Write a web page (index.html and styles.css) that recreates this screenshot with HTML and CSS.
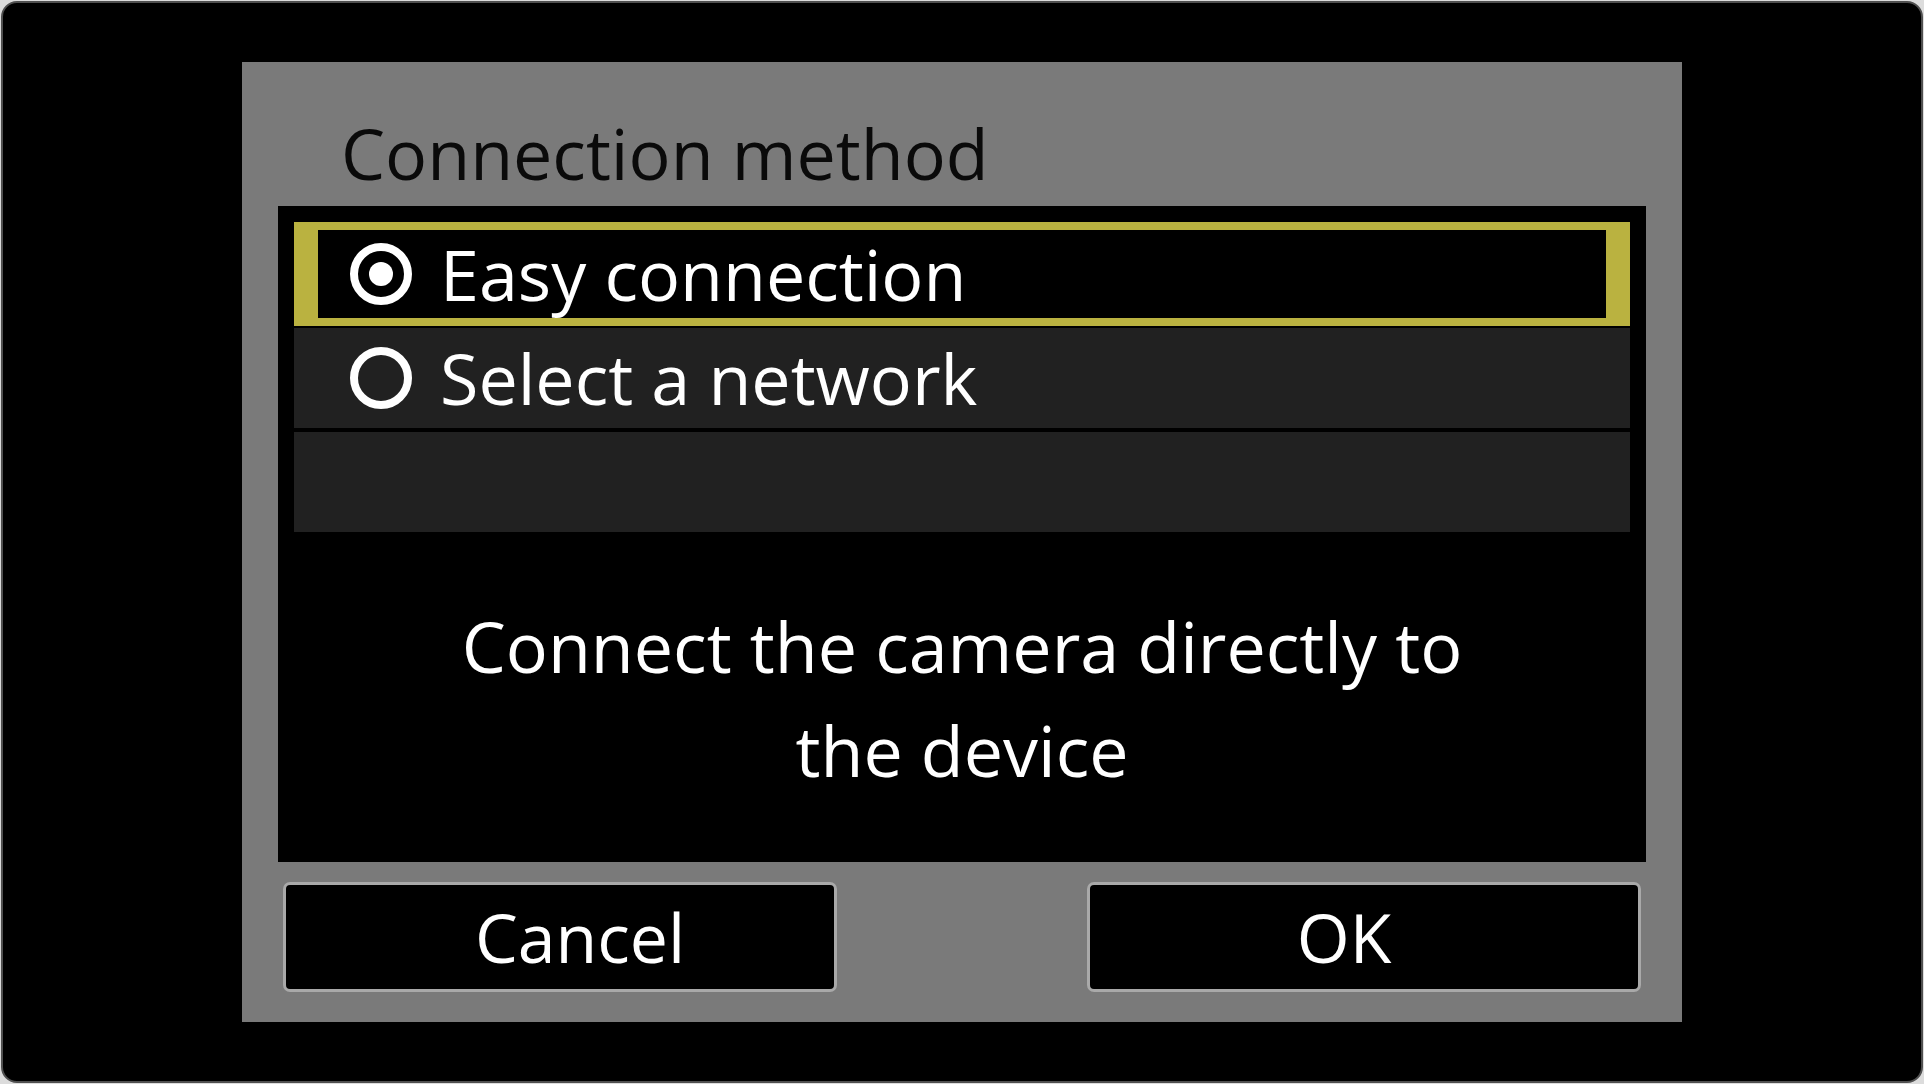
FILE: index.html
```html
<!DOCTYPE html>
<html lang="en">
<head>
<meta charset="utf-8">
<title>Connection method</title>
<link rel="stylesheet" href="styles.css">
</head>
<body>
<div class="screen">
  <div class="panel">
    <div class="title">Connection method</div>
    <div class="list">
      <div class="row selected">
        <span class="radio on"></span>
        <span class="label">Easy connection</span>
      </div>
      <div class="row second">
        <span class="radio"></span>
        <span class="label">Select a network</span>
      </div>
      <div class="row empty"></div>
      <p class="desc">Connect the camera directly to the device</p>
    </div>
    <div class="buttons">
      <div class="btn cancel">Cancel</div>
      <div class="btn ok">OK</div>
    </div>
  </div>
</div>
</body>
</html>
```
FILE: styles.css
```css
html, body {
  margin: 0;
  padding: 0;
}
body {
  width: 1924px;
  height: 1084px;
  background: #dcdcdc;
  font-family: "Open Sans", "Noto Sans", sans-serif;
  overflow: hidden;
}
.screen {
  box-sizing: border-box;
  margin: 1px 0 0 1px;
  width: 1922px;
  height: 1082px;
  background: #000;
  border: 2px solid #505050;
  border-radius: 16px;
  display: flex;
  align-items: center;
  justify-content: center;
}
.panel {
  box-sizing: border-box;
  width: 1440px;
  height: 960px;
  background: #7a7a7a;
  padding: 56px 36px 0 36px;
  display: flex;
  flex-direction: column;
}
.title {
  font-size: 70px;
  line-height: 70px;
  height: 70px;
  color: #0a0a0a;
  padding-left: 63px;
  margin-bottom: 18px;
  white-space: nowrap;
}
.list {
  box-sizing: border-box;
  height: 656px;
  background: #000;
  padding: 16px;
  display: flex;
  flex-direction: column;
}
.row {
  box-sizing: border-box;
  height: 100px;
  background: #212121;
  display: flex;
  align-items: center;
  padding-left: 56px;
  flex-shrink: 0;
}
.row.selected {
  height: 104px;
  background: #000;
  border-style: solid;
  border-color: #bab240;
  border-width: 8px 24px;
  padding-left: 32px;
}
.row.second {
  margin-top: 2px;
}
.row.empty {
  margin-top: 4px;
}
.radio {
  box-sizing: border-box;
  width: 62px;
  height: 62px;
  border: 8px solid #fff;
  border-radius: 50%;
  flex-shrink: 0;
  display: flex;
  align-items: center;
  justify-content: center;
}
.radio.on::after {
  content: "";
  width: 24px;
  height: 24px;
  border-radius: 50%;
  background: #fff;
}
.label {
  margin-left: 28px;
  font-size: 70px;
  line-height: 80px;
  color: #fff;
  white-space: nowrap;
}
.desc {
  margin: 62px auto 0 auto;
  max-width: 1080px;
  font-size: 70px;
  line-height: 104px;
  color: #fff;
  text-align: center;
}
.buttons {
  margin-top: 20px;
  padding: 0 5px;
  display: flex;
  justify-content: space-between;
}
.btn {
  box-sizing: border-box;
  width: 554px;
  height: 110px;
  background: #000;
  border: 3px solid #a9a9a9;
  border-radius: 7px;
  color: #fff;
  font-size: 68px;
  line-height: 70px;
  display: flex;
  align-items: center;
  justify-content: center;
}
.btn.cancel {
  padding-left: 40px;
}
.btn.ok {
  padding-right: 40px;
}
```
